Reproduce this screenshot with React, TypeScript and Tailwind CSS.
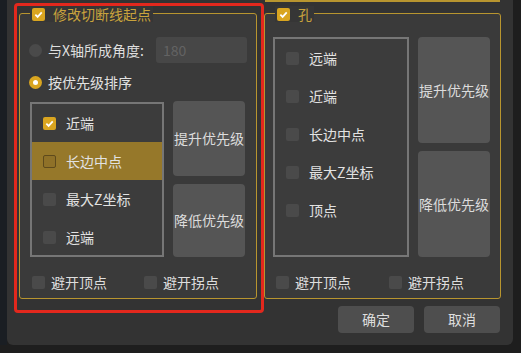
import React from "react";

const font = { fontFamily: '"Noto Sans CJK SC", "Noto Sans", sans-serif' };

function Check({ checked, hl }: { checked?: boolean; hl?: boolean }) {
  if (checked) {
    return (
      <span className="w-[13px] h-[13px] rounded-[2px] bg-[#d9a520] flex items-center justify-center shrink-0">
        <svg width="9" height="9" viewBox="0 0 10 10">
          <polyline points="1.5,5.2 4,7.6 8.6,2.6" fill="none" stroke="#fff" strokeWidth="2" />
        </svg>
      </span>
    );
  }
  if (hl) {
    return <span className="w-[13px] h-[13px] rounded-[2px] bg-[#8f7128] border border-[#5e4a1c] shrink-0" />;
  }
  return <span className="w-[13px] h-[13px] rounded-[2px] bg-[#4a4a4a] shrink-0" />;
}

function Radio({ on }: { on?: boolean }) {
  return on ? (
    <span className="w-[13px] h-[13px] rounded-full bg-[#d9a520] flex items-center justify-center shrink-0">
      <span className="w-[5px] h-[5px] rounded-full bg-white" />
    </span>
  ) : (
    <span className="w-[13px] h-[13px] rounded-full bg-[#4a4a4a] shrink-0" />
  );
}

function Item({ label, checked, hl }: { label: string; checked?: boolean; hl?: boolean }) {
  return (
    <div className={`h-[38px] flex items-center pl-[11px] gap-[10px] ${hl ? "bg-[#96782a]" : ""}`}>
      <Check checked={checked} hl={hl} />
      <span className="text-[14px] text-[#e2e2e2]">{label}</span>
    </div>
  );
}

function Btn({ label, h }: { label: string; h: string }) {
  return (
    <div className={`w-[72px] ${h} rounded-[4px] bg-[#555555] flex items-center justify-center text-[14px] text-[#dcdcdc]`}>
      {label}
    </div>
  );
}

function Group({ title, children }: { title: string; children: React.ReactNode }) {
  return (
    <div className="relative h-[286px] border border-[#b8952f] rounded-[3px] bg-[#3a3a3a]">
      <div className="absolute -top-[8px] left-[10px] flex items-center gap-[8px] px-[2px] bg-[#363636]">
        <Check checked />
        <span className="text-[14px] leading-[16px] text-[#c9a33d]">{title}</span>
      </div>
      {children}
    </div>
  );
}

function BottomChecks({ left, gap }: { left: string; gap: string }) {
  return (
    <div className={`flex items-center ${left} mt-[15px] text-[14px] text-[#dedede]`}>
      <div className="flex items-center gap-[6px]">
        <Check />
        <span>避开顶点</span>
      </div>
      <div className={`flex items-center gap-[6px] ${gap}`}>
        <Check />
        <span>避开拐点</span>
      </div>
    </div>
  );
}

export default function App() {
  return (
    <div className="w-[521px] h-[353px] bg-[#1e1e1e] flex relative overflow-hidden" style={font}>
      <div className="w-[7px] h-[345px] bg-[#1a1e23]" />
      <div className="w-[506px] h-[345px] bg-[#333333] rounded-b-[6px] flex flex-col">
        <div className="h-[2px] ml-[258px] w-[235px] bg-[#b8952f]" />
        <div className="flex gap-[7px] pl-[12px] mt-[11px]">
          <div className="w-[238px]">
            <Group title="修改切断线起点">
              <div className="pl-[9px] pt-[23px]">
                <div className="flex items-center h-[26px]">
                  <Radio />
                  <span className="ml-[6px] text-[14px] text-[#dedede] w-[108px]">与X轴所成角度:</span>
                  <div className="w-[91px] h-[26px] rounded-[3px] bg-[#474747] flex items-center pl-[7px] text-[14px] text-[#636363]">
                    180
                  </div>
                </div>
                <div className="flex items-center h-[20px] mt-[9px] gap-[6px]">
                  <Radio on />
                  <span className="text-[14px] text-[#e2e2e2]">按优先级排序</span>
                </div>
                <div className="flex mt-[10px] ml-px gap-[9px]">
                  <div className="w-[134px] h-[155px] border-2 border-[#767676] bg-[#3c3c3c]">
                    <Item label="近端" checked />
                    <Item label="长边中点" hl />
                    <Item label="最大Z坐标" />
                    <Item label="远端" />
                  </div>
                  <div className="flex flex-col gap-[8px] -mt-px">
                    <Btn label="提升优先级" h="h-[75px]" />
                    <Btn label="降低优先级" h="h-[73px]" />
                  </div>
                </div>
              </div>
              <BottomChecks left="pl-[12px]" gap="ml-[37px]" />
            </Group>
          </div>
          <div className="w-[237px]">
            <Group title="孔">
              <div className="flex pl-[8px] pt-[23px] gap-[9px]">
                <div className="w-[136px] h-[220px] border-2 border-[#767676] bg-[#3c3c3c]">
                  <Item label="远端" />
                  <Item label="近端" />
                  <Item label="长边中点" />
                  <Item label="最大Z坐标" />
                  <Item label="顶点" />
                </div>
                <div className="flex flex-col gap-[8px]">
                  <Btn label="提升优先级" h="h-[106px]" />
                  <Btn label="降低优先级" h="h-[106px]" />
                </div>
              </div>
              <BottomChecks left="pl-[11px]" gap="ml-[38px]" />
            </Group>
          </div>
        </div>
        <div className="flex justify-end gap-[10px] pr-[13px] mt-[7px]">
          <div className="w-[76px] h-[27px] rounded-[4px] bg-[#4e4e4e] flex items-center justify-center text-[14px] text-[#dedede]">
            确定
          </div>
          <div className="w-[76px] h-[27px] rounded-[4px] bg-[#4e4e4e] flex items-center justify-center text-[14px] text-[#dedede]">
            取消
          </div>
        </div>
      </div>
      <div className="absolute left-[14px] top-[3px] w-[250px] h-[310px] border-[3px] border-[#e3281d] rounded-[4px] pointer-events-none" />
    </div>
  );
}
